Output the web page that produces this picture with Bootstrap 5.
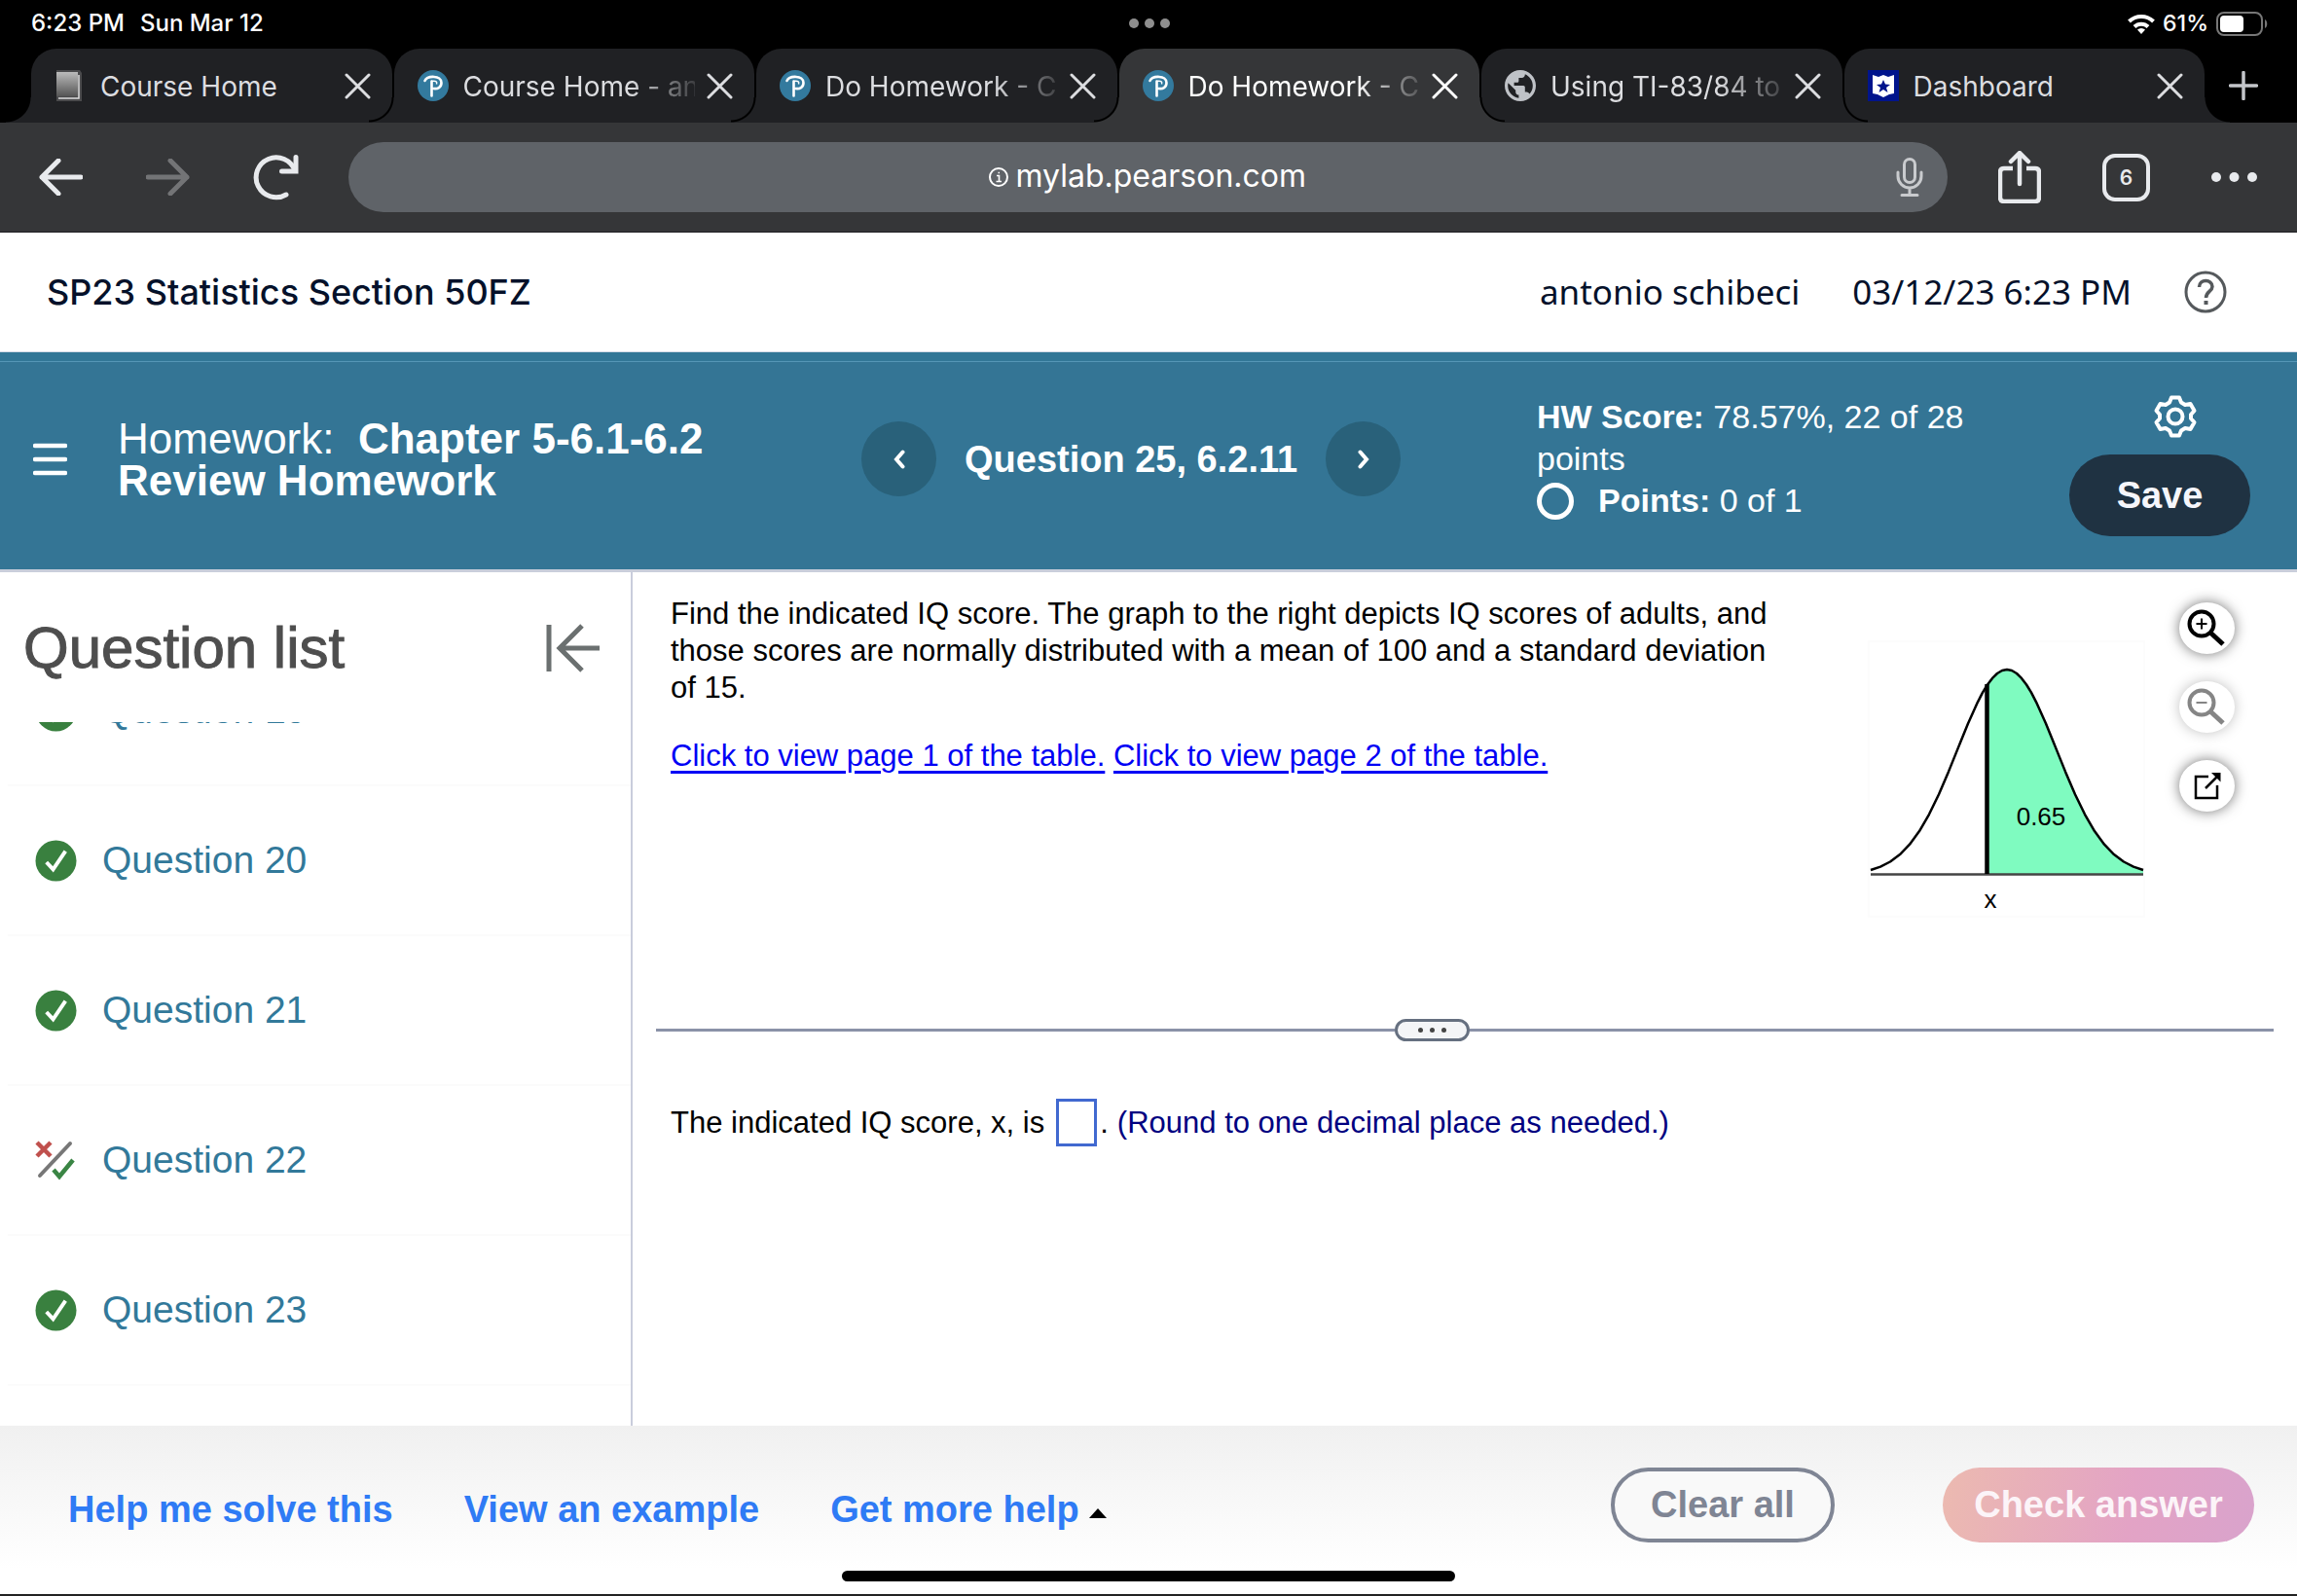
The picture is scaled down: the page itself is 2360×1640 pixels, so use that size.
<!DOCTYPE html>
<html lang="en">
<head>
<meta charset="utf-8">
<meta name="viewport" content="width=device-width, initial-scale=1">
<title>Do Homework - Chapter 5-6.1-6.2 Review Homework</title>
<link href="https://cdn.jsdelivr.net/npm/bootstrap@5.3.0/dist/css/bootstrap.min.css" rel="stylesheet">
<style>
  :root { --ui: Inter, "Liberation Sans", sans-serif; --doc: "Liberation Sans", Arial, sans-serif; --teal: #347595; }
  body { font-family: var(--doc); font-size: 31px; line-height: 38px; color: #000; background: #fff; overflow: hidden; }
  button { font: inherit; color: inherit; background: none; border: 0; padding: 0; }
  svg { display: block; flex: none; }
  a { color: inherit; }

  .statusbar { height: 50px; padding: 0 30px 2px 32px; background: #000; color: #fff; font: 500 24px/28px var(--ui); }
  .statusbar > div { flex: 1 1 0; }
  .statusbar .power { font-size: 23px; }
  .dot3 { gap: 6px; }
  .dot3 i { width: 10px; height: 10px; border-radius: 50%; background: #8e8e8e; }

  .tabstrip { background: #000; padding-left: 32px; font: 400 28px/34px var(--ui); }
  .tabs { gap: 2px; }
  .browser-tab { --tab: #202124; position: relative; flex: 1 1 0; min-width: 0; height: 76px; padding: 0 22px 0 24px; border-radius: 26px 26px 0 0; background: var(--tab); color: #dcdde0; }
  .browser-tab::before, .browser-tab::after { content: ""; position: absolute; bottom: 0; width: 26px; height: 26px; }
  .browser-tab::before { right: 100%; background: radial-gradient(circle at 0 0, transparent 23px, #000 24px, #000 25px, var(--tab) 26px); }
  .browser-tab::after { left: 100%; background: radial-gradient(circle at 100% 0, transparent 23px, #000 24px, #000 25px, var(--tab) 26px); }
  .browser-tab.current { --tab: #353638; color: #fff; }
  .z-low { z-index: 1; } .z-mid { z-index: 2; } .z-high { z-index: 3; } .z-top { z-index: 4; }
  .tab-icon { margin-right: 15px; }
  .tab-title { flex: 1 1 0; overflow: hidden; white-space: nowrap; margin-right: 12px; padding-top: 2px; color: inherit; text-decoration: none; }
  .tab-title.fades { -webkit-mask-image: linear-gradient(90deg, #000 72%, transparent 105%); mask-image: linear-gradient(90deg, #000 72%, transparent 105%); }
  .new-tab { width: 95px; padding-left: 25px; }

  .toolbar { height: 113px; background: #353638; color: #e8eaed; padding: 0 41px 0 40px; font-family: var(--ui); border-bottom: 1px solid #1f1f22; }
  .nav-icons { gap: 65px; padding-right: 51px; }
  .omnibox { flex: 1 1 0; height: 72px; border-radius: 36px; background: #5f6368; position: relative; }
  .omnibox input { width: 300px; background: none; border: 0; padding: 0 0 2px; color: #fff; font: 400 32px/44px var(--ui); outline: 0; }
  .omnibox .mic { position: absolute; right: 25px; top: 16px; }
  .tool-icons { gap: 63px; padding-left: 52px; }
  .tab-count { width: 49px; height: 49px; border: 4px solid #e8eaed; border-radius: 13px; font: 600 21px/41px var(--ui); }

  .course { height: 123px; padding: 0 72px 0 48px; color: #05112a; border-bottom: 1px solid #d6dbe6; }
  .course h1 { font: 500 36px/48px var(--ui); }
  .course .who { font: 400 35px/48px "Noto Sans", sans-serif; gap: 54px; }

  .hw { height: 226px; background: var(--teal); color: #fff; border-bottom: 3px solid #c9cedb; }
  .hw::before { content: ""; display: block; height: 10px; background: #327696; border-bottom: 1px solid #5596b6; }
  .hw-row { padding: 0 48px 14px 0; }
  .hw-title { width: 885px; padding-left: 34px; gap: 52px; }
  .hw-title h2 { font-size: 44px; line-height: 43px; font-weight: 400; max-width: 660px; }
  .hw-nav { gap: 29px; width: 694px; font-size: 38px; font-weight: 700; }
  .round { width: 77px; height: 77px; border-radius: 50%; background: #29617a; }
  .score { font-size: 34px; line-height: 43px; width: 450px; }
  .score .ring { width: 38px; height: 38px; border: 5px solid #fff; border-radius: 50%; margin-right: 25px; }
  .hw-side { margin-top: 14px; gap: 17px; }
  .hw-side .gear { margin-left: 32px; }
  .save { width: 186px; height: 84px; border-radius: 42px; background: #1f3242; font-size: 38px; font-weight: 700; color: #f5f6fb; }

  .work { min-height: 0; }
  .side { width: 650px; border-right: 2px solid #c9cddc; }
  .side-head { height: 154px; padding: 2px 32px 0 24px; }
  .side-head h2 { font-size: 60px; line-height: 64px; font-weight: 400; color: #4e4e4e; -webkit-text-stroke: 1px #4e4e4e; }
  .qlist { min-height: 0; overflow: hidden; padding: 0 0 41px 8px; }
  .qlist li { flex: none; height: 154px; border-bottom: 2px solid #fbfbfb; padding-left: 28px; gap: 26px; }
  .qlist a { color: #32799a; font-size: 39px; line-height: 44px; text-decoration: none; }

  .pane { padding-right: 24px; min-width: 0; }
  .prompt { height: 458px; padding: 24px 40px 0 39px; }
  .prompt .words { flex: 1 1 0; padding: 0 90px 0 0; }
  .prompt p { margin: 0; padding-bottom: 32px; }
  .prompt .words a { color: #0000f5; text-underline-offset: 5px; }
  .graph { margin: 46px 35px 0 0; }
  .float-tools { gap: 28px; padding-top: 7px; }
  .float-tools button { width: 57px; height: 53px; border-radius: 50%; background: #fff; box-shadow: 0 0 14px rgba(0,0,0,.55); }
  .float-tools button:disabled { box-shadow: 0 0 14px rgba(0,0,0,.25); color: #858585; }
  .splitter { margin-left: 24px; height: 24px; }
  .splitter::before, .splitter::after { content: ""; height: 3px; background: #8a92a8; }
  .splitter::before { flex: 759 1 0; } .splitter::after { flex: 826 1 0; }
  .grip { width: 77px; height: 23px; border: 3px solid #667080; border-radius: 12px; background: #f4f5f7; gap: 7px; }
  .grip i { width: 5px; height: 5px; border-radius: 50%; background: #444; }
  .answer { padding: 59px 0 0 39px; }
  .answer input { width: 42px; height: 49px; border: 3px solid #4169d0; background: #fff; padding: 0 3px; margin: 0 3px 0 12px; font: inherit; border-radius: 0; }
  .answer .hint { color: #000080; margin-left: 9px; }

  .actions { height: 175px; padding: 0 44px 11px 70px; background: linear-gradient(#f0f0f0, #fff 85%); border-bottom: 2px solid #222; font-weight: 700; font-size: 38px; line-height: 44px; position: relative; }
  .actions .links { gap: 73px; padding-top: 9px; color: #2f7bf5; }
  .actions .links a { text-decoration: none; }
  .pill { height: 77px; border-radius: 39px; }
  .clear { width: 230px; border: 4px solid #7f8594; color: #7f8594; margin-right: 111px; background: #f9f9f9; }
  .check { width: 320px; color: #fcf4f8; background: linear-gradient(100deg, #ecbab0, #e3a3c5 60%, #d9a3cc); }
  .home-bar { position: absolute; left: 50%; bottom: 13px; width: 630px; height: 11px; margin-left: -315px; border-radius: 6px; background: #000; }
</style>
</head>
<body class="d-flex flex-column vh-100">

<svg width="0" height="0" class="position-absolute" aria-hidden="true">
  <symbol id="x" viewBox="0 0 27 27"><path d="M2 2l23 23M25 2L2 25" fill="none" stroke="currentColor" stroke-width="3" stroke-linecap="round"/></symbol>
  <symbol id="pearson" viewBox="0 0 32 32"><circle cx="16" cy="16" r="16" fill="#337a9e"/><path d="M7.500 11C10 5.500 24.500 5 24.500 13c0 5-4 6.500-8 6M14.500 11.500v15" fill="none" stroke="#fff" stroke-width="2.600" stroke-linecap="round"/><path d="M14.500 11.500c4-1 6 .5 5 3" fill="none" stroke="#fff" stroke-width="1.500"/></symbol>
  <symbol id="ok" viewBox="0 0 44 44"><circle cx="22" cy="22" r="21.500" fill="#39803f"/><path d="M12 23.500l7 7.500 13-19" fill="none" stroke="#fff" stroke-width="4"/></symbol>
</svg>

<div class="statusbar d-flex align-items-center flex-shrink-0">
  <div class="d-flex gap-3"><span>6:23 PM</span><span>Sun Mar 12</span></div>
  <span class="dot3 d-flex"><i></i><i></i><i></i></span>
  <div class="power d-flex justify-content-end align-items-center">
    <svg width="28" height="21" viewBox="0 0 28 21" class="me-2"><g fill="none" stroke="#fff" stroke-width="4"><path d="M1.500 8a18 18 0 0 1 25 0M7 13.500a10 10 0 0 1 14 0"/></g><path d="M10 16.500a6 6 0 0 1 8 0L14 21z" fill="#fff"/></svg>
    <span class="me-2">61%</span>
    <svg width="53" height="25" viewBox="0 0 53 25"><rect x="1" y="1" width="46" height="23" rx="7" fill="none" stroke="#777" stroke-width="2"/><rect x="4" y="4" width="24" height="17" rx="4" fill="#fff"/><path d="M50 8c3 1 3 8 0 9z" fill="#777"/></svg>
  </div>
</div>

<div class="tabstrip d-flex flex-shrink-0">
  <div class="tabs d-flex flex-grow-1">
    <div class="browser-tab z-low d-flex align-items-center">
      <svg class="tab-icon" width="32" height="32" viewBox="0 0 32 32"><defs><linearGradient id="book" x2="0" y2="1"><stop stop-color="#bbb"/><stop offset="1" stop-color="#555"/></linearGradient></defs><path d="M2 0h24l2 3v29H2z" fill="#4a4a4c"/><path d="M2 2h22v25H2z" fill="url(#book)"/><path d="M4 29h21V5" fill="none" stroke="#ddd" stroke-width="1.500"/></svg>
      <a href="#" class="tab-title">Course Home</a>
      <button aria-label="Close tab"><svg width="27" height="27"><use href="#x"/></svg></button>
    </div>
    <div class="browser-tab z-mid d-flex align-items-center">
      <svg class="tab-icon" width="32" height="32"><use href="#pearson"/></svg>
      <a href="#" class="tab-title fades">Course Home - an</a>
      <button aria-label="Close tab"><svg width="27" height="27"><use href="#x"/></svg></button>
    </div>
    <div class="browser-tab z-high d-flex align-items-center">
      <svg class="tab-icon" width="32" height="32"><use href="#pearson"/></svg>
      <a href="#" class="tab-title fades">Do Homework - Ch</a>
      <button aria-label="Close tab"><svg width="27" height="27"><use href="#x"/></svg></button>
    </div>
    <div class="browser-tab current z-top d-flex align-items-center">
      <svg class="tab-icon" width="32" height="32"><use href="#pearson"/></svg>
      <a href="#" class="tab-title fades" aria-current="page">Do Homework - Ch</a>
      <button aria-label="Close tab"><svg width="27" height="27"><use href="#x"/></svg></button>
    </div>
    <div class="browser-tab z-high d-flex align-items-center">
      <svg class="tab-icon" width="32" height="32" viewBox="2 2 20 20"><path fill="#bfc2c7" d="M12 2C6.480 2 2 6.480 2 12s4.480 10 10 10 10-4.480 10-10S17.520 2 12 2zm-1 17.930c-3.950-.49-7-3.850-7-7.930 0-.62.08-1.210.21-1.790L9 15v1c0 1.100.9 2 2 2v1.930zm6.900-2.540c-.26-.81-1-1.390-1.900-1.390h-1v-3c0-.55-.45-1-1-1H8v-2h2c.55 0 1-.45 1-1V7h2c1.100 0 2-.9 2-2v-.41c2.930 1.190 5 4.060 5 7.410 0 2.080-.8 3.970-2.100 5.390z"/></svg>
      <a href="#" class="tab-title fades">Using TI-83/84 to</a>
      <button aria-label="Close tab"><svg width="27" height="27"><use href="#x"/></svg></button>
    </div>
    <div class="browser-tab z-mid d-flex align-items-center">
      <svg class="tab-icon" width="32" height="32" viewBox="0 0 32 32"><path fill="#00148c" d="M0 0h32v32H0z"/><path fill="#fff" d="M5 5l6 2 5-2 5 2 6-2v19l-5 1-6 3-6-3-5-1z"/><path fill="#00148c" d="M16 10l2 4.500 5 .5-4 3 1.500 5-4.500-3-4.500 3 1.500-5-4-3 5-.5z"/></svg>
      <a href="#" class="tab-title">Dashboard</a>
      <button aria-label="Close tab"><svg width="27" height="27"><use href="#x"/></svg></button>
    </div>
  </div>
  <button class="new-tab" aria-label="New tab"><svg width="30" height="30" viewBox="0 0 30 30"><path d="M15 1.500v27M1.500 15h27" stroke="#c4c6ca" stroke-width="3.500" stroke-linecap="round"/></svg></button>
</div>

<div class="toolbar d-flex align-items-center flex-shrink-0">
  <div class="nav-icons d-flex align-items-center">
    <button aria-label="Back"><svg width="45" height="38" viewBox="0 0 45 38"><path d="M43 19H3M20 2L3 19l17 17" fill="none" stroke="currentColor" stroke-width="5" stroke-linecap="round" stroke-linejoin="round"/></svg></button>
    <button aria-label="Forward"><svg width="45" height="38" viewBox="0 0 45 38"><path d="M2 19h40M25 2l17 17-17 17" fill="none" stroke="#737476" stroke-width="5" stroke-linecap="round" stroke-linejoin="round"/></svg></button>
    <button aria-label="Reload"><svg width="47" height="47" viewBox="0 0 47 47"><path d="M34 41A20.500 20.500 0 1 1 43 16.500" fill="none" stroke="currentColor" stroke-width="5" stroke-linecap="round"/><path d="M44 2.500V17H29.500" fill="none" stroke="currentColor" stroke-width="5" stroke-linecap="round"/></svg></button>
  </div>
  <div class="omnibox d-flex align-items-center justify-content-center">
    <svg class="me-2" width="20" height="20" viewBox="0 0 20 20"><circle cx="10" cy="10" r="9" fill="none" stroke="#fff" stroke-width="2"/><path d="M8 8.500h2.500v6M7.500 14.500h5.500M9.500 5.500h1.500" fill="none" stroke="#fff" stroke-width="1.600"/></svg>
    <label for="url" class="visually-hidden">Address</label>
    <input id="url" type="text" value="mylab.pearson.com">
    <button class="mic" aria-label="Voice search"><svg width="28" height="40" viewBox="0 0 28 40"><g fill="none" stroke="#c9cbce" stroke-width="3" stroke-linecap="round"><rect x="8.500" y="1.500" width="11" height="24" rx="5.500"/><path d="M2 15v4a12 12 0 0 0 24 0v-4M14 31v7M6 38.500h16"/></g></svg></button>
  </div>
  <div class="tool-icons d-flex align-items-center">
    <button aria-label="Share"><svg width="44" height="54" viewBox="0 0 44 54"><path d="M15 18H6q-4 0-4 4v26q0 4 4 4h32q4 0 4-4V22q0-4-4-4h-9" fill="none" stroke="currentColor" stroke-width="4.500"/><path d="M22 34V3M13 11l9-9 9 9" fill="none" stroke="currentColor" stroke-width="4.500" stroke-linecap="round" stroke-linejoin="round"/></svg></button>
    <button class="tab-count" aria-label="Open tabs">6</button>
    <button aria-label="Menu"><svg width="47" height="10" viewBox="0 0 47 10" fill="currentColor"><circle cx="5" cy="5" r="5"/><circle cx="23.500" cy="5" r="5"/><circle cx="42" cy="5" r="5"/></svg></button>
  </div>
</div>

<header class="course d-flex align-items-center justify-content-between flex-shrink-0">
  <h1 class="m-0">SP23 Statistics Section 50FZ</h1>
  <div class="who d-flex align-items-center">
    <span>antonio schibeci</span><span>03/12/23 6:23 PM</span>
    <button aria-label="Help"><svg width="44" height="44" viewBox="0 0 44 44" fill="none" stroke="#55595c" stroke-width="3"><circle cx="22" cy="22" r="20"/><path d="M15.500 17c0-8.500 13.500-8.500 13.500-.5 0 5-6.500 5-6.500 11.500" stroke-width="3.500"/><path d="M22.500 31v4" stroke-width="4"/></svg></button>
  </div>
</header>

<section class="hw d-flex flex-column flex-shrink-0">
  <div class="hw-row d-flex align-items-center flex-grow-1">
    <div class="hw-title d-flex align-items-center">
      <button aria-label="Menu"><svg width="35" height="34" viewBox="0 0 35 34"><path d="M2 3h31M2 17h31M2 31h31" stroke="#fff" stroke-width="4.500" stroke-linecap="round"/></svg></button>
      <h2 class="m-0">Homework:&nbsp; <strong>Chapter 5-6.1-6.2 Review&nbsp;Homework</strong></h2>
    </div>
    <div class="hw-nav d-flex align-items-center">
      <button class="round d-flex align-items-center justify-content-center" aria-label="Previous question"><svg width="14" height="20" viewBox="0 0 14 20"><path d="M10.500 2.500L4 10l6.500 7.500" fill="none" stroke="#fff" stroke-width="4" stroke-linecap="round"/></svg></button>
      <span>Question 25, 6.2.11</span>
      <button class="round d-flex align-items-center justify-content-center" aria-label="Next question"><svg width="14" height="20" viewBox="0 0 14 20"><path d="M3.500 2.500L10 10l-6.500 7.500" fill="none" stroke="#fff" stroke-width="4" stroke-linecap="round"/></svg></button>
    </div>
    <div class="score">
      <div><strong>HW Score:</strong> 78.57%, 22 of 28 points</div>
      <div class="d-flex align-items-center"><span class="ring"></span><span><strong>Points:</strong> 0 of 1</span></div>
    </div>
    <div class="hw-side ms-auto d-flex flex-column align-items-center">
      <button class="gear" aria-label="Settings"><svg width="44" height="44" viewBox="0 0 44 44" fill="none" stroke="#fff" stroke-width="4" stroke-linejoin="round"><path d="M18 2.500h8l2 5 4 2.500 5.500-1 4 7-3.500 4v4l3.500 4-4 7-5.500-1-4 2.500-2 5h-8l-2-5-4-2.500-5.500 1-4-7 3.500-4v-4l-3.500-4 4-7 5.500 1 4-2.500z"/><circle cx="22" cy="22" r="7.500"/></svg></button>
      <button class="save">Save</button>
    </div>
  </div>
</section>

<main class="work d-flex flex-grow-1">
  <aside class="side d-flex flex-column flex-shrink-0">
    <div class="side-head d-flex align-items-center justify-content-between flex-shrink-0">
      <h2 class="m-0">Question list</h2>
      <button aria-label="Collapse list"><svg width="55" height="50" viewBox="0 0 55 50"><path d="M3 1v48M55 25H14M37 2L14 25l23 23" fill="none" stroke="#6b7070" stroke-width="5"/></svg></button>
    </div>
    <ul class="qlist list-unstyled m-0 flex-grow-1 d-flex flex-column justify-content-end">
      <li class="d-flex align-items-center"><svg width="43" height="43"><use href="#ok"/></svg><a href="#">Question 19</a></li>
      <li class="d-flex align-items-center"><svg width="43" height="43"><use href="#ok"/></svg><a href="#">Question 20</a></li>
      <li class="d-flex align-items-center"><svg width="43" height="43"><use href="#ok"/></svg><a href="#">Question 21</a></li>
      <li class="d-flex align-items-center"><svg width="43" height="43" viewBox="0 0 43 43" fill="none"><path d="M2 3l14 14M16 3L2 17" stroke="#c0504d" stroke-width="4.500"/><path d="M36 4L5 37" stroke="#777" stroke-width="4" stroke-linecap="round"/><path d="M19 31l6 7 14-17" stroke="#3a8544" stroke-width="4.500"/></svg><a href="#">Question 22</a></li>
      <li class="d-flex align-items-center"><svg width="43" height="43"><use href="#ok"/></svg><a href="#">Question 23</a></li>
    </ul>
  </aside>

  <section class="pane flex-grow-1 d-flex flex-column">
    <div class="prompt d-flex align-items-start">
      <div class="words">
        <p>Find the indicated IQ score. The graph to the right depicts IQ scores of adults, and those scores are normally distributed with a mean of 100 and a standard deviation of 15.</p>
        <p><a href="#">Click to view page 1 of the table.</a> <a href="#">Click to view page 2 of the table.</a></p>
      </div>
      <svg class="graph" width="285" height="285" viewBox="0 0 285 285" role="img" aria-label="Normal curve, area 0.65 to the right of x">
        <rect x="1" y="1" width="283" height="283" fill="#fff" stroke="#fcfcfc" stroke-width="2"/>
        <path fill="#7ffbc0" d="M122 241V46L128 39 133 34 138 31 143 30 148 31 153 34 158 38.900 163 45.500 168 53.700 173 63.300 183 85.500 193 110.100 203 134.900 213 158.200 223 178.800 233 196.100 243 209.700 253 220.100 263 227.500 273 232.600 283 236V241z"/>
        <path d="M3 240.500h280" stroke="#444" stroke-width="2.500"/>
        <path d="M3 236L13 232.600 23 227.500 33 220.100 43 209.700 53 196.100 63 178.800 73 158.200 83 134.900 93 110.100 103 85.500 113 63.300 118 53.700 123 45.500 128 38.900 133 34 138 31 143 30 148 31 153 34 158 38.900 163 45.500 168 53.700 173 63.300 183 85.500 193 110.100 203 134.900 213 158.200 223 178.800 233 196.100 243 209.700 253 220.100 263 227.500 273 232.600 283 236" fill="none" stroke="#000" stroke-width="2.500" stroke-linejoin="round"/>
        <path d="M122.500 45v195" stroke="#000" stroke-width="4.500"/>
        <text x="178" y="190" font-size="26" text-anchor="middle">0.65</text>
        <text x="126" y="275" font-size="26" text-anchor="middle">x</text>
      </svg>
      <div class="float-tools d-flex flex-column">
        <button class="d-flex align-items-center ps-2" aria-label="Zoom in"><svg width="39" height="39" viewBox="0 0 39 39" fill="none" stroke="currentColor"><circle cx="15" cy="15" r="12.500" stroke-width="4"/><path d="M9.500 15h11M15 9.500v11" stroke-width="2"/><path d="M24 24l13 12" stroke-width="5"/></svg></button>
        <button class="d-flex align-items-center ps-2" aria-label="Zoom out" disabled><svg width="39" height="39" viewBox="0 0 39 39" fill="none" stroke="currentColor"><circle cx="15" cy="15" r="12.500" stroke-width="4"/><path d="M9.500 15h11" stroke-width="2"/><path d="M24 24l13 12" stroke-width="5"/></svg></button>
        <button class="d-flex align-items-center justify-content-center" aria-label="Pop out"><svg width="28" height="28" viewBox="0 0 28 28"><path d="M15 4H2v22h22V13M12 16L24 4" fill="none" stroke="#000" stroke-width="2.500"/><path d="M18 0h9.500v9.500z"/></svg></button>
      </div>
    </div>
    <div class="splitter d-flex align-items-center">
      <button class="grip d-flex align-items-center justify-content-center" aria-label="Resize panes"><i></i><i></i><i></i></button>
    </div>
    <div class="answer d-flex align-items-center">
      <label for="iq">The indicated IQ score, x, is</label><input id="iq" type="text"><span>.</span><span class="hint">(Round to one decimal place as needed.)</span>
    </div>
  </section>
</main>

<footer class="actions d-flex align-items-center flex-shrink-0">
  <div class="links d-flex">
    <a href="#">Help me solve this</a>
    <a href="#">View an example</a>
    <a href="#" class="d-flex align-items-center">Get more help<svg class="ms-2 mt-2" width="22" height="11" viewBox="0 0 22 11"><path d="M2 11L11 1l9 10z"/></svg></a>
  </div>
  <button class="pill clear ms-auto">Clear all</button>
  <button class="pill check">Check answer</button>
  <div class="home-bar"></div>
</footer>

<script src="https://cdn.jsdelivr.net/npm/bootstrap@5.3.0/dist/js/bootstrap.bundle.min.js"></script>
</body>
</html>
